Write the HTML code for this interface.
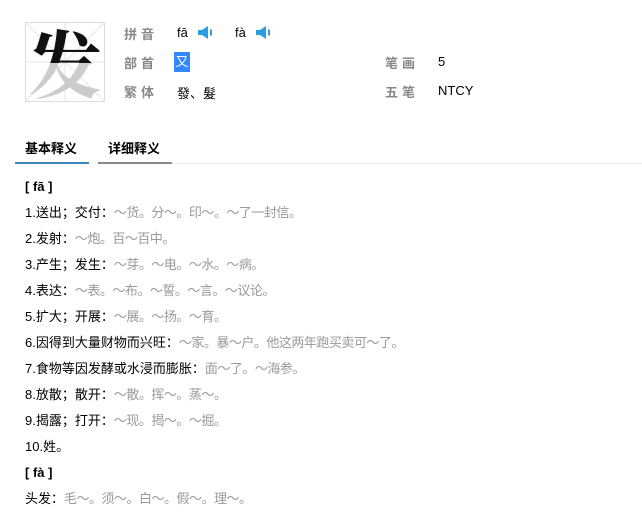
<!DOCTYPE html>
<html><head><meta charset="utf-8"><style>
body{margin:0;width:642px;height:516px;background:#fff;font-family:"Liberation Sans","Noto Sans CJK SC",sans-serif;font-size:13px;color:#000;position:relative;overflow:hidden}
.a{position:absolute;white-space:nowrap}
.lab{color:#888;letter-spacing:4px;font-weight:bold}
.g{color:#999;letter-spacing:-0.5px}
.box{position:absolute;left:25px;top:22px;width:78px;height:78px;border:1px solid #ddd;overflow:hidden}
.ch{position:absolute;left:0;top:-8px;width:78px;font-size:74px;line-height:92px;text-align:center;font-family:"Noto Serif CJK SC","Noto Sans CJK SC",serif;font-weight:bold}
.spk{display:inline-block;width:16px;height:13px;vertical-align:-2px;margin-left:10px}
</style></head><body>
<div class="box">
<svg width="78" height="78" style="position:absolute;left:0;top:0"><line x1="0" y1="0" x2="78" y2="78" stroke="#e6e6e6"/><line x1="78" y1="0" x2="0" y2="78" stroke="#e6e6e6"/><line x1="39" y1="0" x2="39" y2="78" stroke="#e6e6e6"/><line x1="0" y1="39" x2="78" y2="39" stroke="#e6e6e6"/></svg>
<div class="ch" style="color:#ccc">发</div>
<div style="position:absolute;left:0;top:0;width:78px;height:40px;overflow:hidden"><div class="ch" style="color:#111">发</div></div>
</div>
<div class="a lab" style="left:124px;top:24px">拼音</div>
<div class="a" style="left:177px;top:25px">fā<svg class="spk" viewBox="0 0 16 13"><path d="M0 4h4l6-4v13l-6-4H0z" fill="#2a9ee0"/><rect x="12" y="3.5" width="2" height="6" fill="#2a9ee0"/></svg></div>
<div class="a" style="left:235px;top:25px">fà<svg class="spk" viewBox="0 0 16 13"><path d="M0 4h4l6-4v13l-6-4H0z" fill="#2a9ee0"/><rect x="12" y="3.5" width="2" height="6" fill="#2a9ee0"/></svg></div>
<div class="a lab" style="left:124px;top:53px">部首</div>
<div class="a" style="left:174px;top:52px;background:#3388ff;color:#fff;width:16px;height:20px;line-height:20px;text-align:center">又</div>
<div class="a lab" style="left:124px;top:82px">繁体</div>
<div class="a" style="left:177px;top:83px">發、髮</div>
<div class="a lab" style="left:385px;top:53px">笔画</div>
<div class="a" style="left:438px;top:54px">5</div>
<div class="a lab" style="left:385px;top:82px">五笔</div>
<div class="a" style="left:438px;top:83px">NTCY</div>
<div class="a" style="left:25px;top:138px;font-weight:bold">基本释义</div>
<div class="a" style="left:108px;top:138px;font-weight:bold">详细释义</div>
<div class="a" style="left:15px;top:162px;width:74px;height:2px;background:#3a88c0"></div>
<div class="a" style="left:98px;top:162px;width:74px;height:2px;background:#888"></div>
<div class="a" style="left:172px;top:163px;width:470px;height:1px;background:#eee"></div>
<div class="a" style="left:25px;top:179px;line-height:16px">
<div style="font-weight:bold;height:26px">[ fā ]</div>
<div style="height:26px">1.送出；交付：<span class="g">～货。分～。印～。～了一封信。</span></div>
<div style="height:26px">2.发射：<span class="g">～炮。百～百中。</span></div>
<div style="height:26px">3.产生；发生：<span class="g">～芽。～电。～水。～病。</span></div>
<div style="height:26px">4.表达：<span class="g">～表。～布。～誓。～言。～议论。</span></div>
<div style="height:26px">5.扩大；开展：<span class="g">～展。～扬。～育。</span></div>
<div style="height:26px">6.因得到大量财物而兴旺：<span class="g">～家。暴～户。他这两年跑买卖可～了。</span></div>
<div style="height:26px">7.食物等因发酵或水浸而膨胀：<span class="g">面～了。～海参。</span></div>
<div style="height:26px">8.放散；散开：<span class="g">～散。挥～。蒸～。</span></div>
<div style="height:26px">9.揭露；打开：<span class="g">～现。揭～。～掘。</span></div>
<div style="height:26px">10.姓。</div>
<div style="font-weight:bold;height:26px">[ fà ]</div>
<div style="height:26px">头发：<span class="g">毛～。须～。白～。假～。理～。</span></div>
</div>
</body></html>
